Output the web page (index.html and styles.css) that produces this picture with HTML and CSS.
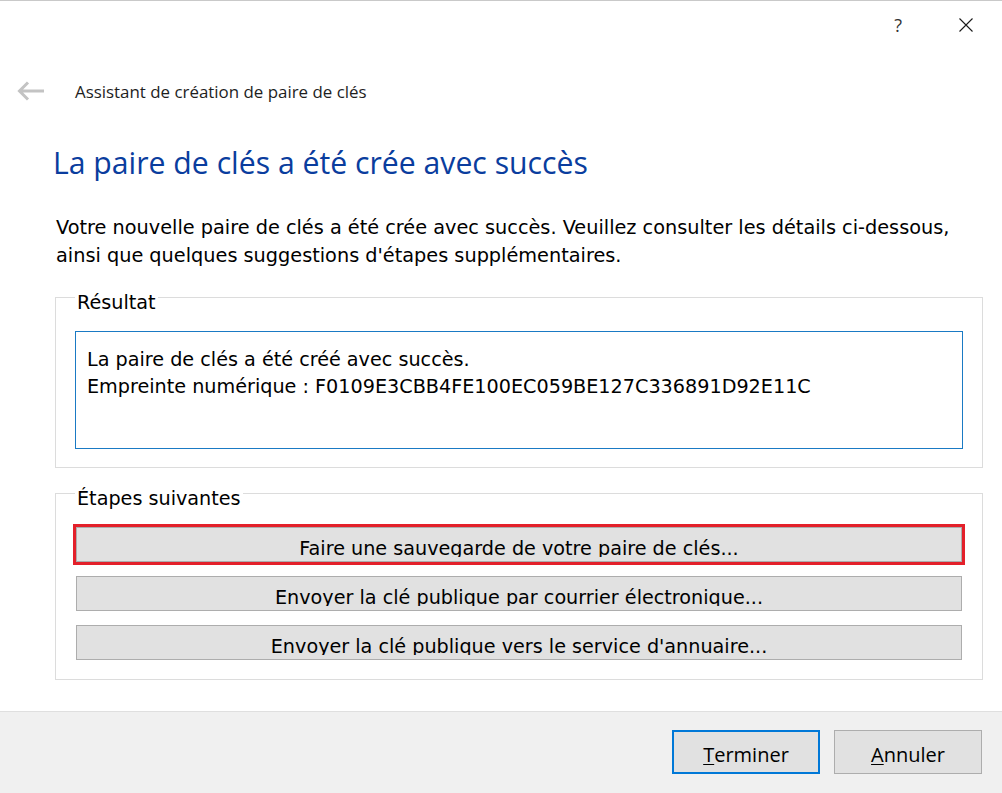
FILE: index.html
```html
<!DOCTYPE html>
<html lang="fr">
<head>
<meta charset="utf-8">
<title>Assistant de création de paire de clés</title>
<link rel="stylesheet" href="styles.css">
</head>
<body>
<div class="window">
  <div class="titlebar">
    <span class="help">?</span>
    <svg class="close" width="14" height="14" viewBox="0 0 14 14"><path d="M0.5 0.5 L13.5 13.5 M13.5 0.5 L0.5 13.5" stroke="#1a1a1a" stroke-width="1.1" fill="none"/></svg>
  </div>
  <div class="nav">
    <svg class="back" width="28" height="20" viewBox="0 0 28 20"><path d="M2.5 10 H27 M11 1.5 L2.5 10 L11 18.5" stroke="#c3c3c3" stroke-width="3" fill="none"/></svg>
    <span class="nav-title">Assistant de création de paire de clés</span>
  </div>
  <div class="content">
    <h1 class="title">La paire de clés a été crée avec succès</h1>
    <p class="intro">Votre nouvelle paire de clés a été crée avec succès. Veuillez consulter les détails ci-dessous,<br>ainsi que quelques suggestions d'étapes supplémentaires.</p>
    <section class="group">
      <div class="legend">Résultat</div>
      <div class="textbox">La paire de clés a été créé avec succès.<br>Empreinte numérique : F0109E3CBB4FE100EC059BE127C336891D92E11C</div>
    </section>
    <section class="group group-steps">
      <div class="legend">Étapes suivantes</div>
      <div class="steps">
        <button class="step step-highlight"><span class="step-label">Faire une sauvegarde de votre paire de clés...</span></button>
        <button class="step"><span class="step-label">Envoyer la clé publique par courrier électronique...</span></button>
        <button class="step"><span class="step-label">Envoyer la clé publique vers le service d'annuaire...</span></button>
      </div>
    </section>
  </div>
  <div class="footer">
    <button class="btn btn-default"><u>T</u>erminer</button>
    <button class="btn"><u>A</u>nnuler</button>
  </div>
</div>
</body>
</html>
```
FILE: styles.css
```css
* { box-sizing: border-box; }
html, body { margin: 0; padding: 0; background: #fff; }
body { font-family: "DejaVu Sans", sans-serif; color: #000; }

.window {
  width: 1002px;
  height: 793px;
  display: flex;
  flex-direction: column;
  border-top: 1px solid #c9c9c9;
  overflow: hidden;
}

.titlebar {
  height: 47px;
  display: flex;
  justify-content: flex-end;
  align-items: center;
  padding-right: 29px;
  gap: 57px;
}
.help {
  font-family: "Open Sans", sans-serif;
  font-size: 18px;
  color: #333;
  line-height: 20px;
}
.close { display: block; }

.nav {
  height: 86px;
  display: flex;
  align-items: center;
  padding-left: 17px;
}
.back { display: block; }
.nav-title {
  margin-left: 30px;
  font-family: "Open Sans", sans-serif;
  font-size: 16.9px;
  color: #1e1e1e;
}

.content {
  padding: 0 19px 0 55px;
}
.title {
  margin: 9px 0 0 -2px;
  font-family: "Open Sans", sans-serif;
  font-weight: 400;
  font-size: 30.2px;
  line-height: 40px;
  color: #0a3d9e;
  white-space: nowrap;
}
.intro {
  margin: 31px 0 0 1px;
  font-size: 19.3px;
  line-height: 28px;
  white-space: nowrap;
}

.group {
  border: 1px solid #dcdcdc;
  margin-top: 27px;
  padding: 0 19px 18px 19px;
}
.group-steps {
  margin-top: 25px;
  padding-bottom: 19px;
}
.legend {
  width: max-content;
  margin: -7px 0 0 0;
  padding: 0 2px;
  background: #fff;
  font-size: 19.2px;
  line-height: 24px;
  height: 24px;
}
.textbox {
  margin-top: 16px;
  height: 118px;
  border: 1px solid #1a7ac4;
  padding: 14px 10px 0 11px;
  font-size: 19.2px;
  line-height: 27px;
  white-space: nowrap;
}

.steps {
  margin-top: 16px;
  display: flex;
  flex-direction: column;
  gap: 14px;
}
.step {
  margin: 0 1px;
  height: 35px;
  padding: 8px 0 0 0;
  background: #e1e1e1;
  border: 1px solid #adadad;
  border-radius: 0;
  font-family: "DejaVu Sans", sans-serif;
  font-size: 19.2px;
  color: #000;
  text-align: center;
  display: block;
}
.step-label {
  display: inline-block;
  vertical-align: top;
  height: 20px;
  line-height: 24px;
  overflow: hidden;
  white-space: nowrap;
}
.step-highlight {
  outline: 3px solid #e3202a;
}

.footer {
  margin-top: auto;
  height: 82px;
  background: #f0f0f0;
  border-top: 1px solid #dfdfdf;
  display: flex;
  justify-content: flex-end;
  align-items: flex-start;
  gap: 14px;
  padding: 18px 20px 0 0;
}
.btn {
  width: 148px;
  height: 44px;
  background: #e1e1e1;
  border: 1px solid #adadad;
  border-radius: 0;
  font-family: "Open Sans", sans-serif;
  font-size: 20px;
  line-height: 28px;
  color: #000;
  padding: 5px 0 0 0;
}
.btn u {
  text-underline-offset: 2px;
  text-decoration-thickness: 1px;
}
.btn-default {
  border: 2px solid #0078d7;
}
```
